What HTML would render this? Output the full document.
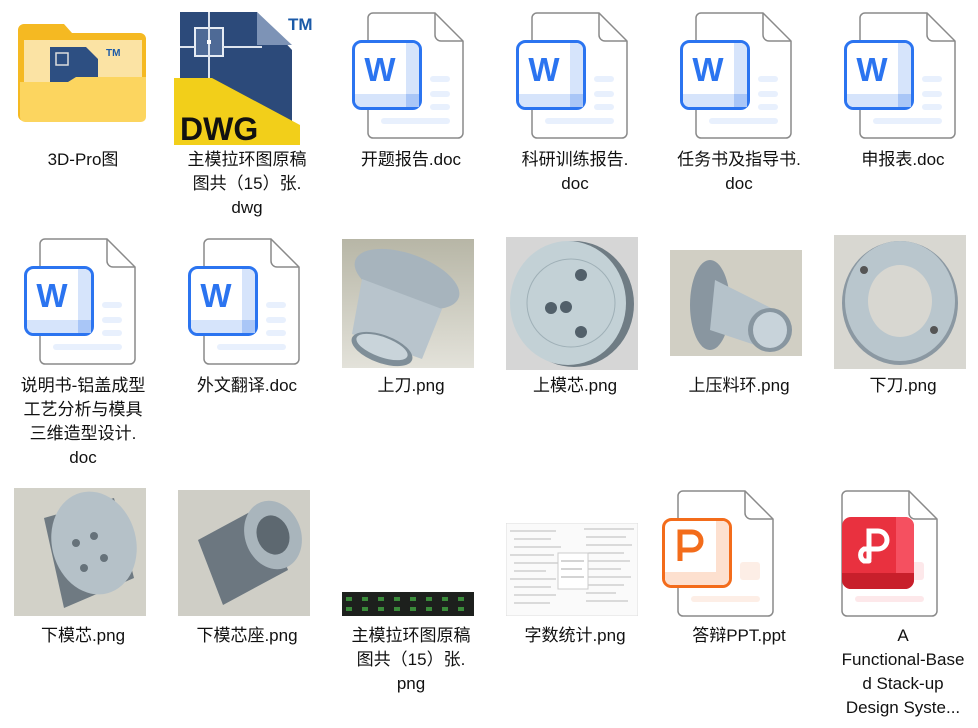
<!DOCTYPE html><html><head><meta charset="utf-8"><style>
body{margin:0;width:978px;height:728px;background:#fff;position:relative;overflow:hidden;font-family:"Liberation Sans","Noto Sans CJK SC",sans-serif}
.l{position:absolute;width:164px;text-align:center;font-size:17px;line-height:24px;color:#111}
.i{position:absolute}
</style></head><body>
<svg width="0" height="0" style="position:absolute"><defs>
<g id="pg"><path d="M23,2H85L113,30V122a5,5 0 0 1 -5,5H23a5,5 0 0 1 -5,-5V7a5,5 0 0 1 5,-5Z" fill="#fff" stroke="#8a8a8a" stroke-width="1.5"/><path d="M85,2V24a6,6 0 0 0 6,6H113" fill="none" stroke="#8a8a8a" stroke-width="1.5"/></g>
<g id="wd"><use href="#pg"/>
<g fill="#e8f0fd"><rect x="80" y="65" width="20" height="6" rx="3"/><rect x="80" y="80" width="20" height="6" rx="3"/><rect x="80" y="93" width="20" height="6" rx="3"/><rect x="31" y="107" width="69" height="6" rx="3"/></g>
<rect x="3.5" y="30.5" width="67" height="67" rx="8" fill="#fff" stroke="#2b74f0" stroke-width="3"/>
<path d="M56,32h6a7,7 0 0 1 7,7v50H56Z" fill="#d6e4fb"/><path d="M5,83H69v6a7,7 0 0 1 -7,7H12a7,7 0 0 1 -7,-7Z" fill="#d6e4fb"/><rect x="56" y="83" width="13" height="13" fill="#a9c6f7"/>
<text x="30" y="70" text-anchor="middle" font-family="Liberation Sans" font-weight="bold" font-size="33" fill="#2b74f0">W</text></g>
</defs></svg>

<svg class="i" style="left:18px;top:20px" width="130" height="102" viewBox="0 0 130 102">
<path d="M6,4h40l8,9h68a6,6 0 0 1 6,6v76a6,6 0 0 1 -6,6H6a6,6 0 0 1 -6,-6V10a6,6 0 0 1 6,-6Z" fill="#f5b922"/>
<rect x="6" y="20" width="118" height="70" fill="#fbe3a4"/>
<path d="M32,27h36l12,12v45H32Z" fill="#2d4f82"/>
<rect x="38" y="33" width="12" height="12" fill="none" stroke="#ddd" stroke-width="1.5"/>
<text x="88" y="36" font-size="10" font-weight="bold" fill="#1b5aa8" font-family="Liberation Sans">TM</text>
<path d="M2,62h48l8,-5h70v40a5,5 0 0 1 -5,5H7a5,5 0 0 1 -5,-5Z" fill="#fcd55f"/>
</svg>
<svg class="i" style="left:172px;top:10px" width="150" height="136" viewBox="0 0 150 136">
<path d="M8,2H85L120,40V120H8Z" fill="#2c4a7a"/><path d="M85,2V35H120Z" fill="#7d93b6"/>
<rect x="23" y="18" width="28" height="28" fill="#4e6a96" stroke="#e6ecf4" stroke-width="2"/><path d="M37,2V68M8,37H23M51,37H90M37,18V2" stroke="#dde4ee" stroke-width="2"/><rect x="35" y="30" width="4" height="4" fill="#fff"/>
<text x="116" y="20" font-size="17" font-weight="bold" fill="#1b5aa8" font-family="Liberation Sans">TM</text>
<path d="M2,68H40L128,115V135H2Z" fill="#f2cf1a"/>
<text x="8" y="130" font-size="32" font-weight="bold" fill="#111" font-family="Liberation Sans">DWG</text>
</svg>
<svg class="i" style="left:350px;top:11px" width="120" height="130"><use href="#wd"/></svg>
<svg class="i" style="left:514px;top:11px" width="120" height="130"><use href="#wd"/></svg>
<svg class="i" style="left:678px;top:11px" width="120" height="130"><use href="#wd"/></svg>
<svg class="i" style="left:842px;top:11px" width="120" height="130"><use href="#wd"/></svg>
<svg class="i" style="left:22px;top:237px" width="120" height="130"><use href="#wd"/></svg>
<svg class="i" style="left:186px;top:237px" width="120" height="130"><use href="#wd"/></svg>

<svg class="i" style="left:342px;top:239px" width="132" height="129"><defs><linearGradient id="bg1" x1="0" y1="0" x2="0" y2="1"><stop offset="0" stop-color="#b7b6a6"/><stop offset="1" stop-color="#e3e2da"/></linearGradient></defs><rect width="132" height="129" fill="url(#bg1)"/><ellipse cx="65" cy="40" rx="55" ry="25" transform="rotate(20 65 40)" fill="#a7b4bd"/><path d="M20,40L100,70L80,120L10,95Z" fill="#b8c4cc"/><ellipse cx="40" cy="110" rx="32" ry="14" transform="rotate(20 40 110)" fill="#7f8e98"/><ellipse cx="40" cy="108" rx="27" ry="10" transform="rotate(20 40 108)" fill="#c9d4da"/></svg>
<svg class="i" style="left:506px;top:237px" width="132" height="133"><rect width="132" height="133" fill="#d6d6d6"/><ellipse cx="68" cy="67" rx="60" ry="63" fill="#6f7c84"/><ellipse cx="62" cy="66" rx="58" ry="62" fill="#c3d1d6"/><circle cx="65" cy="66" r="44" fill="none" stroke="#9fb0b7"/><g fill="#52606a"><circle cx="75" cy="38" r="6"/><circle cx="45" cy="71" r="6"/><circle cx="60" cy="70" r="6"/><circle cx="75" cy="95" r="6"/></g></svg>
<svg class="i" style="left:670px;top:250px" width="132" height="106"><rect width="132" height="106" fill="#d1cfc4"/><ellipse cx="40" cy="55" rx="20" ry="45" fill="#8996a0"/><path d="M45,30L105,60L100,100L40,80Z" fill="#b5c2ca"/><ellipse cx="100" cy="80" rx="22" ry="22" fill="#8896a0"/><ellipse cx="100" cy="80" rx="17" ry="18" fill="#c8d3da"/></svg>
<svg class="i" style="left:834px;top:235px" width="132" height="134"><rect width="132" height="134" fill="#d8d7d1"/><ellipse cx="66" cy="68" rx="58" ry="62" fill="#8b98a2"/><ellipse cx="66" cy="66" rx="55" ry="60" fill="#b9c6cd"/><ellipse cx="66" cy="66" rx="32" ry="36" fill="#d8d7d1"/><circle cx="30" cy="35" r="4" fill="#555"/><circle cx="100" cy="95" r="4" fill="#555"/></svg>

<svg class="i" style="left:14px;top:488px" width="132" height="128"><rect width="132" height="128" fill="#d2d1c8"/><path d="M30,30L100,10L120,90L50,120Z" fill="#6f7a82"/><ellipse cx="80" cy="55" rx="42" ry="52" transform="rotate(-15 80 55)" fill="#b5c1c8"/><g fill="#66727a"><circle cx="62" cy="55" r="4"/><circle cx="80" cy="48" r="4"/><circle cx="90" cy="70" r="4"/><circle cx="70" cy="80" r="4"/></g></svg>
<svg class="i" style="left:178px;top:490px" width="132" height="126"><rect width="132" height="126" fill="#cfcec6"/><path d="M20,50L85,15L110,80L45,115Z" fill="#6c7780"/><ellipse cx="95" cy="45" rx="28" ry="35" transform="rotate(-20 95 45)" fill="#a9b5bc"/><ellipse cx="95" cy="45" rx="16" ry="20" transform="rotate(-20 95 45)" fill="#5d6870"/></svg>
<svg class="i" style="left:342px;top:592px" width="132" height="24"><rect width="132" height="24" fill="#1d201d"/><g fill="#3a8a3a"><rect x="4" y="5" width="6" height="4"/><rect x="20" y="5" width="6" height="4"/><rect x="36" y="5" width="6" height="4"/><rect x="52" y="5" width="6" height="4"/><rect x="68" y="5" width="6" height="4"/><rect x="84" y="5" width="6" height="4"/><rect x="100" y="5" width="6" height="4"/><rect x="116" y="5" width="6" height="4"/><rect x="4" y="15" width="6" height="4"/><rect x="20" y="15" width="6" height="4"/><rect x="36" y="15" width="6" height="4"/><rect x="52" y="15" width="6" height="4"/><rect x="68" y="15" width="6" height="4"/><rect x="84" y="15" width="6" height="4"/><rect x="100" y="15" width="6" height="4"/><rect x="116" y="15" width="6" height="4"/></g></svg>
<svg class="i" style="left:506px;top:523px" width="132" height="93"><rect width="132" height="93" fill="#fafafa" stroke="#ddd"/><g stroke="#bbb" stroke-width="1"><path d="M4,8H50M8,16H45M8,24H55M4,32H48M8,40H52M8,48H40M4,56H50M8,64H45M8,72H50M8,80H44"/><path d="M78,6H128M80,14H120M80,22H126M80,30H118M80,38H124M80,46H115M80,54H125M80,62H118M80,70H110M80,78H122"/></g><rect x="52" y="30" width="30" height="36" fill="#fff" stroke="#ccc"/><path d="M55,38H78M55,46H76M55,54H78" stroke="#aaa"/></svg>
<svg class="i" style="left:660px;top:489px" width="120" height="130"><use href="#pg"/><rect x="80" y="73" width="20" height="18" rx="3" fill="#fdeee6"/><rect x="31" y="107" width="69" height="6" rx="3" fill="#fdeee6"/><rect x="3.5" y="30.5" width="67" height="67" rx="8" fill="#fff" stroke="#f36c1b" stroke-width="3"/><path d="M56,32h6a7,7 0 0 1 7,7v50H56Z" fill="#fde0cf"/><path d="M5,83H69v6a7,7 0 0 1 -7,7H12a7,7 0 0 1 -7,-7Z" fill="#fde0cf"/><path d="M20,72V43h12a9,9 0 0 1 0,18H20" fill="none" stroke="#f36c1b" stroke-width="5"/></svg>
<svg class="i" style="left:824px;top:489px" width="120" height="130"><use href="#pg"/><rect x="80" y="73" width="20" height="18" rx="3" fill="#fde8ea"/><rect x="31" y="107" width="69" height="6" rx="3" fill="#fde8ea"/><rect x="18" y="28" width="72" height="72" rx="9" fill="#e9313f"/><path d="M18,84H90v7a9,9 0 0 1 -9,9H27a9,9 0 0 1 -9,-9Z" fill="#c81f2b"/><path d="M72,28h9a9,9 0 0 1 9,9v47H72Z" fill="#f55060"/><path d="M45,70V42h9a9,9 0 0 1 0,18H40a7,7 0 0 0 0,12h5" fill="none" stroke="#fff" stroke-width="5" stroke-linecap="round"/></svg>

<div class="l" style="left:1px;top:148px">3D-Pro图</div>
<div class="l" style="left:165px;top:148px">主模拉环图原稿<br>图共（15）张.<br>dwg</div>
<div class="l" style="left:329px;top:148px">开题报告.doc</div>
<div class="l" style="left:493px;top:148px">科研训练报告.<br>doc</div>
<div class="l" style="left:657px;top:148px">任务书及指导书.<br>doc</div>
<div class="l" style="left:821px;top:148px">申报表.doc</div>
<div class="l" style="left:1px;top:374px">说明书-铝盖成型<br>工艺分析与模具<br>三维造型设计.<br>doc</div>
<div class="l" style="left:165px;top:374px">外文翻译.doc</div>
<div class="l" style="left:329px;top:374px">上刀.png</div>
<div class="l" style="left:493px;top:374px">上模芯.png</div>
<div class="l" style="left:657px;top:374px">上压料环.png</div>
<div class="l" style="left:821px;top:374px">下刀.png</div>
<div class="l" style="left:1px;top:624px">下模芯.png</div>
<div class="l" style="left:165px;top:624px">下模芯座.png</div>
<div class="l" style="left:329px;top:624px">主模拉环图原稿<br>图共（15）张.<br>png</div>
<div class="l" style="left:493px;top:624px">字数统计.png</div>
<div class="l" style="left:657px;top:624px">答辩PPT.ppt</div>
<div class="l" style="left:821px;top:624px">A<br>Functional-Base<br>d Stack-up<br>Design Syste...</div>
</body></html>
